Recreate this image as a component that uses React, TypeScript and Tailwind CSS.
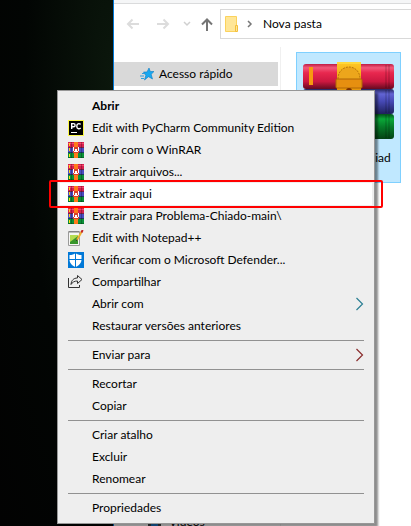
import type { ReactNode } from "react";

function WinRarIcon() {
  return (
    <svg width="16" height="16" viewBox="0 0 16 16" shapeRendering="crispEdges" aria-hidden="true">
      <rect width="16" height="5" fill="#d8204e" />
      <rect y="1" width="16" height="1" fill="#f5486e" />
      <rect y="5" width="16" height="1" fill="#7a2048" />
      <rect y="6" width="16" height="4" fill="#4a4cc0" />
      <rect y="10" width="16" height="1" fill="#1d3a60" />
      <rect y="11" width="16" height="5" fill="#0b9038" />
      <rect y="15" width="16" height="1" fill="#067028" />
      <rect x="1" y="1" width="1" height="3" fill="#ffd21b" />
      <rect x="1" y="6" width="1" height="3" fill="#ffd21b" />
      <rect x="1" y="12" width="1" height="3" fill="#ffe01b" />
      <rect x="3" width="1" height="16" fill="#000" opacity=".25" />
      <rect x="13" width="1" height="16" fill="#000" opacity=".25" />
      <rect x="6" width="4" height="16" fill="#ff7a1a" />
      <rect x="5" y="5" width="6" height="6" fill="#d8402c" />
      <rect x="5" y="5" width="1" height="4" fill="#fff" />
      <rect x="10" y="5" width="1" height="4" fill="#fff" />
      <rect x="6" y="9" width="4" height="1" fill="#fff" />
      <rect x="7" y="7" width="2" height="2" fill="#fff" />
    </svg>
  );
}

function PyCharmIcon() {
  return (
    <svg width="16" height="16" viewBox="0 0 16 16" aria-hidden="true">
      <rect width="16" height="16" fill="#fcf84a" />
      <rect x="1" y="1" width="14" height="14" fill="#000" />
      <path d="M3.700 9V3.600h1.800a1.500 1.500 0 0 1 0 3.200H4M12.600 4.400C11 3 8.800 3.700 8.800 6.200S11 9.500 12.700 8" fill="none" stroke="#fff" strokeWidth="1.400" />
      <rect x="3" y="12" width="6" height="1" fill="#fff" />
    </svg>
  );
}

function NotepadIcon() {
  return (
    <svg width="16" height="16" viewBox="0 0 16 16" aria-hidden="true">
      <path d="M.5 1.500h11v14H.5z" fill="#f6f6f4" stroke="#9a9a9a" />
      <path d="M2 5h8v8L2 14z" fill="#b4dc50" />
      <path d="M2 12 10 6v8H2z" fill="#37962b" />
      <path d="M2 1v2M4 1v2M6 1v2M8 1v2M10 1v2" stroke="#666" strokeWidth=".8" />
      <path d="M13.500 2 9 10" stroke="#f0b030" strokeWidth="2" />
      <path d="m14.700 0-1.300 2.500" stroke="#c42222" strokeWidth="2" />
      <path d="m9 9.500-.6 1.500" stroke="#333" />
    </svg>
  );
}

function DefenderIcon() {
  return (
    <svg width="16" height="16" viewBox="0 0 16 16" shapeRendering="geometricPrecision" aria-hidden="true">
      <rect width="16" height="16" fill="#0078d7" />
      <path d="M7.500 1C6 2.500 4 3 1.500 3v4.500c0 3.500 2.500 6 6 7.500 3.500-1.500 6-4 6-7.500V3C11 3 9 2.500 7.500 1z" fill="#fff" />
      <path d="M7.500 0v16M1 7.500h13" stroke="#0078d7" />
    </svg>
  );
}

function ShareIcon() {
  return (
    <svg width="16" height="16" viewBox="0 0 16 16" fill="none" stroke="#333" aria-hidden="true">
      <path d="M.5 4v9.500h11V11" />
      <path d="M9.500 1.500 14 5.500l-4.500 4V7C6.500 7 4.500 8 3 10.500 3.300 6.500 5.500 4 9.500 4z" strokeLinejoin="round" />
    </svg>
  );
}

function ArchiveIcon() {
  return (
    <svg width="94" height="80" viewBox="0 0 94 80" className="shrink-0" aria-hidden="true">
      <defs>
        <linearGradient id="red" x2="0" y2="1">
          <stop offset="0" stopColor="#c01c44" />
          <stop offset=".15" stopColor="#f2597a" />
          <stop offset=".35" stopColor="#e8284f" />
          <stop offset=".7" stopColor="#cc1840" />
          <stop offset="1" stopColor="#650a20" />
        </linearGradient>
        <linearGradient id="blue" x2="0" y2="1">
          <stop offset="0" stopColor="#25265f" />
          <stop offset=".2" stopColor="#6264d4" />
          <stop offset=".5" stopColor="#4649b4" />
          <stop offset="1" stopColor="#1f205c" />
        </linearGradient>
        <linearGradient id="green" x2="0" y2="1">
          <stop offset="0" stopColor="#04501a" />
          <stop offset=".2" stopColor="#0aa838" />
          <stop offset=".5" stopColor="#067d29" />
          <stop offset="1" stopColor="#034214" />
        </linearGradient>
        <linearGradient id="gold" x2="0" y2="1">
          <stop offset="0" stopColor="#ffc928" />
          <stop offset=".3" stopColor="#e99a0c" />
          <stop offset="1" stopColor="#d67e05" />
        </linearGradient>
      </defs>
      <rect x="1" y="53" width="91" height="25" rx="3" fill="url(#green)" />
      <rect x="1" y="28" width="91" height="25" rx="3" fill="url(#blue)" />
      <rect x="1" y="3" width="91" height="25" rx="3" fill="url(#red)" />
      <path d="M84 4v23M87 4v23M84 29v23M87 29v23M84 54v23M87 54v23" stroke="#000" opacity=".25" />
      <rect x="7" y="6" width="4" height="18" fill="#f79a10" />
      <rect x="35" y="1" width="24" height="78" fill="url(#gold)" />
      <rect x="35" y="1" width="24" height="2" fill="#ffd83a" />
      <path d="M36 18C36 2 58 2 58 18" fill="#eca61c" stroke="#b8740c" strokeDasharray="2 1" />
      <rect x="34" y="18" width="26" height="9" rx="1" fill="#e68f10" stroke="#b06606" />
      <path d="M44 30a3 3 0 0 1 6 0z" fill="#7a2e00" />
    </svg>
  );
}

function NavIcons() {
  return (
    <svg width="106" height="30" viewBox="0 0 106 30" fill="none" strokeWidth="2" className="shrink-0" aria-hidden="true">
      <path d="M25 15H14M18.500 10.500 14 15l4.500 4.500" stroke="#dcdcdc" />
      <path d="M43 15h11M49.500 10.500 54 15l-4.500 4.500" stroke="#dcdcdc" />
      <path d="m70 13 3 3 3-3" stroke="#d0d0d0" strokeWidth="1.500" />
      <path d="M93 22V11M88 15.500l5-5 5 5" stroke="#757575" />
    </svg>
  );
}

type Entry = { label: string; icon?: ReactNode; bold?: boolean; active?: boolean; arrow?: string };

const groups: Entry[][] = [
  [
    { label: "Abrir", bold: true },
    { label: "Edit with PyCharm Community Edition", icon: <PyCharmIcon /> },
    { label: "Abrir com o WinRAR", icon: <WinRarIcon /> },
    { label: "Extrair arquivos...", icon: <WinRarIcon /> },
    { label: "Extrair aqui", icon: <WinRarIcon />, active: true },
    { label: "Extrair para Problema-Chiado-main\\", icon: <WinRarIcon /> },
    { label: "Edit with Notepad++", icon: <NotepadIcon /> },
    { label: "Verificar com o Microsoft Defender...", icon: <DefenderIcon /> },
    { label: "Compartilhar", icon: <ShareIcon /> },
    { label: "Abrir com", arrow: "#2b7f93" },
    { label: "Restaurar versões anteriores" },
  ],
  [{ label: "Enviar para", arrow: "#8a2d2d" }],
  [{ label: "Recortar" }, { label: "Copiar" }],
  [{ label: "Criar atalho" }, { label: "Excluir" }, { label: "Renomear" }],
  [{ label: "Propriedades" }],
];

function MenuRow({ label, icon, bold, active, arrow }: Entry) {
  return (
    <button
      type="button"
      role="menuitem"
      className={`relative flex h-[22px] w-full items-center gap-2 px-2 text-left ${bold ? "font-bold" : ""} ${active ? "bg-white" : ""}`}
    >
      <span className="size-4 shrink-0">{icon}</span>
      <span className="flex-1 whitespace-nowrap">{label}</span>
      {arrow && (
        <svg width="8" height="14" viewBox="0 0 8 14" fill="none" stroke={arrow} strokeWidth="1.200" aria-hidden="true">
          <path d="m.5 1 6 6-6 6" />
        </svg>
      )}
      {active && <span className="pointer-events-none absolute -inset-x-[11px] -inset-y-[3px] rounded-xs border-2 border-[#ff0000]" />}
    </button>
  );
}

export default function App() {
  return (
    <div className="relative flex h-screen overflow-hidden bg-[#020302] font-[Lato,'Open_Sans',sans-serif] text-xs text-black">
      <div className="w-[113px] shrink-0 bg-[radial-gradient(ellipse_at_100%_15%,#0b170c_0%,#020503_55%,#020202_100%)]" />
      <main className="flex min-w-0 flex-1 flex-col border-l border-[#0078d7] bg-white">
        <div className="h-1 shrink-0 border-b border-[#dadbdc] bg-[#f5f6f7]" />
        <header className="flex shrink-0 pt-[5px]">
          <NavIcons />
          <div className="flex h-[30px] flex-1 items-center border border-r-0 border-[#d9d9d9] pl-1">
            <svg width="14" height="18" viewBox="0 0 14 18" aria-hidden="true">
              <path d="M.5 1.500h11v15H.5z" fill="#ffe697" stroke="#fbd25c" />
              <path d="M10.500 10.500h2v6h-2z" fill="#ffe697" stroke="#f4bf3a" />
            </svg>
            <svg width="6" height="8" viewBox="0 0 6 8" fill="none" className="mx-2" aria-hidden="true">
              <path d="m1 1 3 3-3 3" stroke="#777" strokeWidth="1.500" />
            </svg>
            <span className="ml-0.5">Nova pasta</span>
          </div>
        </header>
        <div className="flex min-h-0 flex-1 pt-2">
          <nav className="flex w-[167px] shrink-0 flex-col border-r border-[#f0f0f0] pt-[15px]">
            <a href="#acesso" className="mr-0.5 flex h-6 shrink-0 items-center gap-1 bg-[#d9d9d9] pl-[26px]">
              <svg width="15" height="14" viewBox="0 0 15 14" aria-hidden="true">
                <path d="m9 1 1.300 3.500H14l-2.800 2.800 1.300 4.700-4-2.300L4.500 13l1.300-4.500L3.500 5H7z" fill="#18a8f0" stroke="#0b7cc4" strokeWidth=".6" />
                <path d="M2 6.500h2M0 9h4M1 11.500h3" stroke="#2a9fe0" />
              </svg>
              Acesso rápido
            </a>
            <a href="#videos" className="-mb-1 mt-auto flex h-4 shrink-0 items-center gap-2 pl-[34px]">
              <svg width="13" height="14" viewBox="0 0 13 14" aria-hidden="true">
                <path d="M0 0h13v14H0z" fill="#444" />
                <path d="M3 0h7v14H3z" fill="#1e78c8" />
              </svg>
              Vídeos
            </a>
          </nav>
          <section className="min-w-0 flex-1 pl-[15px] pt-[5px]">
            <div className="flex h-[131px] w-[105px] flex-col items-center justify-between border border-[#7fd0ff] bg-[#c0e8ff] pb-4 pt-2">
              <ArchiveIcon />
              <span className="whitespace-nowrap">Problema-Chiad</span>
            </div>
          </section>
        </div>
      </main>
      <div
        role="menu"
        className="absolute left-[57px] top-[90px] w-[318px] border border-[#979797] bg-[#eee] px-0.5 py-1 shadow-[3px_3px_2px_rgba(0,0,0,0.45)]"
      >
        {groups.map((group, i) => (
          <div key={i}>
            {i > 0 && <hr className="mx-2 my-[3px] border-[#919191]" />}
            {group.map((entry) => (
              <MenuRow key={entry.label} {...entry} />
            ))}
          </div>
        ))}
      </div>
    </div>
  );
}
